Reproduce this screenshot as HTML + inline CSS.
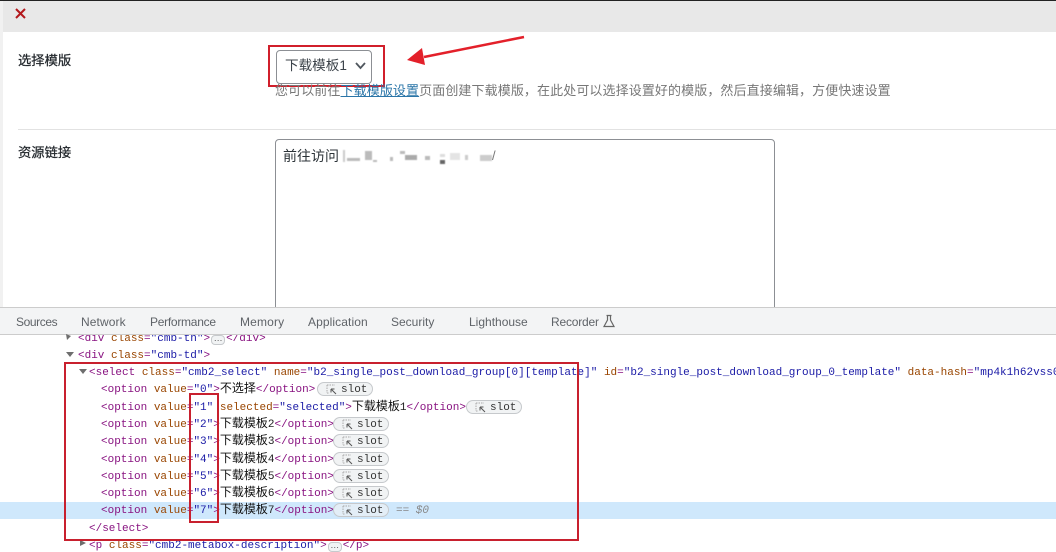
<!DOCTYPE html>
<html><head><meta charset="utf-8">
<style>
html,body{margin:0;padding:0;background:#fff}
#p{position:relative;width:1056px;height:552px;overflow:hidden;background:#fff;font-family:"Liberation Sans","Noto Sans CJK SC",sans-serif}
#p div{position:absolute;white-space:pre}
.c{font-family:"Liberation Mono","Noto Sans CJK SC",monospace;font-size:11px;line-height:16px;height:16px;color:#881280}
.c i{font-style:normal}
.n{color:#994500}.v{color:#1a1aa6}
.k{font-family:"Liberation Sans","Noto Sans CJK SC",sans-serif;color:#111;font-size:12px;line-height:0}
.d{color:#222}
.chip{display:inline-block;vertical-align:top;box-sizing:border-box;width:14px;height:10px;margin:4px 1px 0;border:1px solid #c6c9cc;border-radius:4px;background:#f1f3f4;color:#555;font:9px/5px "Liberation Sans",sans-serif;text-align:center}
#p .slot{height:12px;width:54px;border:1px solid #c6c9cc;border-radius:8px;background:#f1f3f4;box-sizing:content-box}
.slot b{position:absolute;left:23px;top:-1px;font:11px/16px "Liberation Mono",monospace;color:#333}
.slot svg{position:absolute;left:8px;top:1px}
#p .tab{font-size:12px;line-height:16px;color:#5f6368;top:314px}
.bl{filter:blur(.5px)}
</style></head><body><div id="p">
<!-- top page -->
<div style="left:0;top:0;width:1056px;height:1px;background:#222"></div>
<div style="left:3px;top:1px;width:1053px;height:31px;background:#e8e8e8"></div>
<div style="left:0;top:1px;width:3px;height:306px;background:#f1f1f1"></div>
<svg style="position:absolute;left:14px;top:7px" width="13" height="13"><path d="M2 2L11 11M11 2L2 11" stroke="#b3181c" stroke-width="2"/></svg>
<div style="left:18px;top:52px;font-size:13.3px;line-height:18px;color:#23282d;-webkit-text-stroke:.25px #23282d">选择模版</div>
<div style="left:18px;top:144px;font-size:13.3px;line-height:18px;color:#23282d;-webkit-text-stroke:.25px #23282d">资源链接</div>
<div style="left:18px;top:129px;width:1038px;height:1px;background:#e2e2e2"></div>
<div style="left:276px;top:50px;width:94px;height:32px;border:1px solid #8c8f94;border-radius:4px;box-sizing:content-box"></div>
<div style="left:285px;top:56px;font-size:13.6px;line-height:20px;color:#3c434a">下载模板1</div>
<svg style="position:absolute;left:354px;top:61px" width="13" height="10"><path d="M2 2L6.500 7L11 2" fill="none" stroke="#50575e" stroke-width="1.800"/></svg>
<div style="left:268px;top:45px;width:113px;height:38px;border:2px solid #d11f2b;box-sizing:content-box"></div>
<div style="left:275px;top:82px;font-size:13px;letter-spacing:.1px;line-height:18px;color:#777">您可以前往<span style="color:#2a75a8;text-decoration:underline">下载模版设置</span>页面创建下载模版，在此处可以选择设置好的模版，然后直接编辑，方便快速设置</div>
<svg style="position:absolute;left:400px;top:30px" width="130" height="50"><path d="M124 7L24 27" stroke="#e3202a" stroke-width="2.500" fill="none"/><path d="M7 30L22 18L25 35Z" fill="#e3202a"/></svg>
<div style="left:275px;top:139px;width:498px;height:175px;border:1px solid #8c8f94;border-radius:4px;box-sizing:content-box"></div>
<div style="left:283px;top:146px;font-size:14px;line-height:20px;color:#2c3338">前往访问</div>
<div class="bl" style="left:343px;top:150px;width:2px;height:12px;background:#ccc"></div>
<div class="bl" style="left:347px;top:158px;width:13px;height:3px;background:#bbb"></div>
<div class="bl" style="left:365px;top:151px;width:7px;height:9px;background:#bbb"></div>
<div class="bl" style="left:373px;top:160px;width:4px;height:2px;background:#bbb"></div>
<div class="bl" style="left:390px;top:157px;width:3px;height:4px;background:#bbb"></div>
<div class="bl" style="left:400px;top:151px;width:5px;height:3px;background:#bbb"></div>
<div class="bl" style="left:405px;top:155px;width:12px;height:5px;background:#aaa"></div>
<div class="bl" style="left:425px;top:156px;width:5px;height:4px;background:#bbb"></div>
<div class="bl" style="left:440px;top:160px;width:5px;height:4px;background:#666"></div>
<div class="bl" style="left:440px;top:154px;width:5px;height:3px;background:#ddd"></div>
<div class="bl" style="left:450px;top:153px;width:10px;height:7px;background:#e4e4e4"></div>
<div class="bl" style="left:465px;top:155px;width:3px;height:5px;background:#ccc"></div>
<div class="bl" style="left:480px;top:155px;width:12px;height:6px;background:#ccc"></div>
<div style="left:492px;top:148px;font-size:13px;line-height:16px;color:#777">/</div>
<!-- clipped code line under tab bar -->
<div class="c" style="left:78px;top:331px">&lt;div <i class="n">class</i>=<i class="v">"cmb-th"</i>&gt;<span class="chip">…</span>&lt;/div&gt;</div>
<!-- devtools tabs -->
<div style="left:0;top:307px;width:1056px;height:28px;background:#f3f4f5;border-top:1px solid #ccc;border-bottom:1px solid #ccc;box-sizing:border-box"></div>
<div class="tab" style="left:16px;letter-spacing:-.4px">Sources</div>
<div class="tab" style="left:81px;letter-spacing:.1px">Network</div>
<div class="tab" style="left:150px;letter-spacing:-.27px">Performance</div>
<div class="tab" style="left:240px;letter-spacing:.15px">Memory</div>
<div class="tab" style="left:308px;letter-spacing:.1px">Application</div>
<div class="tab" style="left:391px">Security</div>
<div class="tab" style="left:469px">Lighthouse</div>
<div class="tab" style="left:551px;letter-spacing:-.2px">Recorder</div>
<svg style="position:absolute;left:602px;top:314px" width="14" height="15"><path d="M4.500 1.500H9.500M5.500 1.500V6L2 12.500H12L8.500 6V1.500" fill="none" stroke="#666" stroke-width="1.200"/></svg>
<!-- highlighted row -->
<div style="left:0;top:502px;width:1056px;height:17px;background:#cfe8fc"></div>
<!-- code -->
<svg style="position:absolute;left:60px;top:332px" width="40" height="220"><path d="M6 2L11 4L7 8Z" fill="#6e6e6e"/><path d="M6 20H14L10 25Z" fill="#6e6e6e"/><path d="M19 37H27L23 42Z" fill="#6e6e6e"/><path d="M20 208L26 211L20 214Z" fill="#6e6e6e"/></svg>
<div class="c" style="left:78px;top:348px">&lt;div <i class="n">class</i>=<i class="v">"cmb-td"</i>&gt;</div>
<div class="c" style="left:89px;top:365px">&lt;select <i class="n">class</i>=<i class="v">"cmb2_select"</i> <i class="n">name</i>=<i class="v">"b2_single_post_download_group[0][template]"</i> <i class="n">id</i>=<i class="v">"b2_single_post_download_group_0_template"</i> <i class="n">data-hash</i>=<i class="v">"mp4k1h62vss0"</i></div>
<div class="c" style="left:101px;top:382px">&lt;option <i class="n">value</i>=<i class="v">"0"</i>&gt;<span class="k">不选择</span>&lt;/option&gt;</div>
<div class="c" style="left:101px;top:400px">&lt;option <i class="n">value</i>=<i class="v">"1"</i> <i class="n">selected</i>=<i class="v">"selected"</i>&gt;<span class="k">下载模板</span><span class="d">1</span>&lt;/option&gt;</div>
<div class="c" style="left:101px;top:417px">&lt;option <i class="n">value</i>=<i class="v">"2"</i>&gt;<span class="k">下载模板</span><span class="d">2</span>&lt;/option&gt;</div>
<div class="c" style="left:101px;top:434px">&lt;option <i class="n">value</i>=<i class="v">"3"</i>&gt;<span class="k">下载模板</span><span class="d">3</span>&lt;/option&gt;</div>
<div class="c" style="left:101px;top:452px">&lt;option <i class="n">value</i>=<i class="v">"4"</i>&gt;<span class="k">下载模板</span><span class="d">4</span>&lt;/option&gt;</div>
<div class="c" style="left:101px;top:469px">&lt;option <i class="n">value</i>=<i class="v">"5"</i>&gt;<span class="k">下载模板</span><span class="d">5</span>&lt;/option&gt;</div>
<div class="c" style="left:101px;top:486px">&lt;option <i class="n">value</i>=<i class="v">"6"</i>&gt;<span class="k">下载模板</span><span class="d">6</span>&lt;/option&gt;</div>
<div class="c" style="left:101px;top:503px">&lt;option <i class="n">value</i>=<i class="v">"7"</i>&gt;<span class="k">下载模板</span><span class="d">7</span>&lt;/option&gt;</div>
<div style="left:396px;top:503px;font:italic 11px/16px 'Liberation Mono',monospace;color:#888">== $0</div>
<div class="c" style="left:89px;top:521px">&lt;/select&gt;</div>
<div class="c" style="left:89px;top:538px">&lt;p <i class="n">class</i>=<i class="v">"cmb2-metabox-description"</i>&gt;<span class="chip">…</span>&lt;/p&gt;</div>
<!-- slots -->
<div class="slot" style="left:317px;top:382px"><svg width="11" height="11"><path d="M1 1H9M1 1V9M1 9H3" fill="none" stroke="#aaa" stroke-dasharray="1.500 1"/><path d="M10 10L5 5M5 5H8.500M5 5V8.500" fill="none" stroke="#555"/></svg><b>slot</b></div>
<div class="slot" style="left:466px;top:400px"><svg width="11" height="11"><path d="M1 1H9M1 1V9M1 9H3" fill="none" stroke="#aaa" stroke-dasharray="1.500 1"/><path d="M10 10L5 5M5 5H8.500M5 5V8.500" fill="none" stroke="#555"/></svg><b>slot</b></div>
<div class="slot" style="left:333px;top:417px"><svg width="11" height="11"><path d="M1 1H9M1 1V9M1 9H3" fill="none" stroke="#aaa" stroke-dasharray="1.500 1"/><path d="M10 10L5 5M5 5H8.500M5 5V8.500" fill="none" stroke="#555"/></svg><b>slot</b></div>
<div class="slot" style="left:333px;top:434px"><svg width="11" height="11"><path d="M1 1H9M1 1V9M1 9H3" fill="none" stroke="#aaa" stroke-dasharray="1.500 1"/><path d="M10 10L5 5M5 5H8.500M5 5V8.500" fill="none" stroke="#555"/></svg><b>slot</b></div>
<div class="slot" style="left:333px;top:452px"><svg width="11" height="11"><path d="M1 1H9M1 1V9M1 9H3" fill="none" stroke="#aaa" stroke-dasharray="1.500 1"/><path d="M10 10L5 5M5 5H8.500M5 5V8.500" fill="none" stroke="#555"/></svg><b>slot</b></div>
<div class="slot" style="left:333px;top:469px"><svg width="11" height="11"><path d="M1 1H9M1 1V9M1 9H3" fill="none" stroke="#aaa" stroke-dasharray="1.500 1"/><path d="M10 10L5 5M5 5H8.500M5 5V8.500" fill="none" stroke="#555"/></svg><b>slot</b></div>
<div class="slot" style="left:333px;top:486px"><svg width="11" height="11"><path d="M1 1H9M1 1V9M1 9H3" fill="none" stroke="#aaa" stroke-dasharray="1.500 1"/><path d="M10 10L5 5M5 5H8.500M5 5V8.500" fill="none" stroke="#555"/></svg><b>slot</b></div>
<div class="slot" style="left:333px;top:503px;background:#e3eef7"><svg width="11" height="11"><path d="M1 1H9M1 1V9M1 9H3" fill="none" stroke="#aaa" stroke-dasharray="1.500 1"/><path d="M10 10L5 5M5 5H8.500M5 5V8.500" fill="none" stroke="#555"/></svg><b>slot</b></div>
<!-- red annotation boxes -->
<div style="left:64px;top:362px;width:511px;height:175px;border:2px solid #c8202e;box-sizing:content-box"></div>
<div style="left:189px;top:393px;width:26px;height:126px;border:2px solid #c8202e;box-sizing:content-box"></div>
</div></body></html>
